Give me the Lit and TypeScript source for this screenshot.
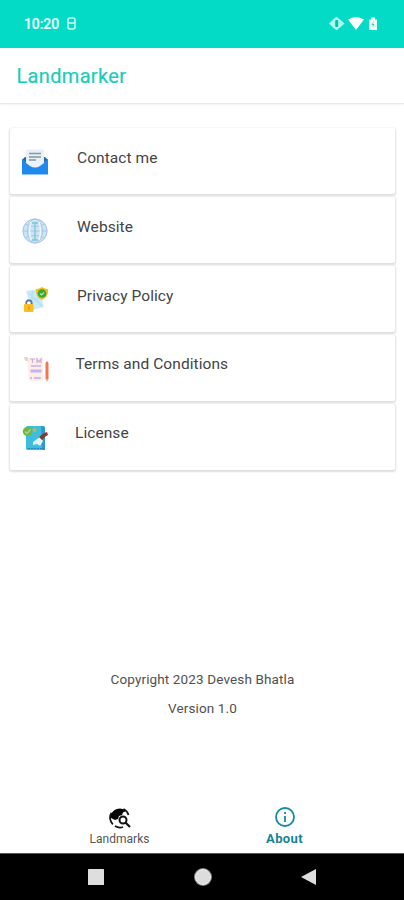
import { LitElement, html, css, svg } from "lit";
import { customElement } from "lit/decorators.js";

const icons = {
  mail: svg`<path d="M0 11 3 8h20l3 3v14H0z" fill="#1769c4"/><path d="M4 2q0-1.500 1.500-1.500h15Q22 .5 22 2v14H4z" fill="#e9f0f5"/><path d="M7 4.500h12M7 8h12M7 11h7" stroke="#8498a8" stroke-width="1.300"/><path d="M0 10 5 13.500l3 2.500q5 3.500 10 0l3-2.500 5-3.500v15.500H0z" fill="#2189ee"/><path d="M4 12h18v2l-4 3q-5 3-10 0l-4-3z" fill="#eaf3fa"/>`,
  globe: svg`<circle cx="13" cy="13" r="12.500" fill="#c9e6f3"/><g fill="none" stroke="#b3c2e6" stroke-width="1"><circle cx="13" cy="13" r="12"/><ellipse cx="13" cy="13" rx="7.500" ry="12"/><path d="M3 6q10 5 20 0M1 13h24M3 20q10-5 20 0"/></g><path d="M9 4q-3 9 0 18M17 4q3 9 0 18" fill="none" stroke="#e5f8fc" stroke-width="1.500"/><path d="M13 4v18M10 5h6M10 22h6" stroke="#7cc4da" stroke-width="1.300"/>`,
  privacy: svg`<path d="M4 4 17 2l5 18-12 3z" fill="#c9eafb"/><path d="m7 6 13 13M11 4l-3 17M5 13l14-2" stroke="#b5e0f8" stroke-width="1.500"/><path d="M20 0q3 2 6 2 1 8-6 11-7-3-6-11 3 0 6-2z" fill="#f0bf22"/><circle cx="20" cy="6.500" r="4.300" fill="#35a936"/><path d="m18 6.500 1.500 1.500L22 5.500" fill="none" stroke="#b9e6b4" stroke-width="1.200"/><path d="M4.200 18v-1.800a2.800 2.800 0 0 1 5.600 0V18" fill="none" stroke="#5b7487" stroke-width="1.600"/><rect x="2" y="17" width="9.500" height="8" rx="1" fill="#fbbd23"/><path d="M7 19.500v3" stroke="#c98a1a" stroke-width="1.200"/>`,
  terms: svg`<path d="M5 2h16v23H7z" fill="#fbeee9"/><path d="M2 1h4v4H3z" fill="#e3dac8"/><path d="M8 3h5M10.500 3v4M15 7V3l2 3 2-3v4" fill="none" stroke="#c9b0dd" stroke-width="1.200"/><path d="M9 10h10" stroke="#c0a6e0" stroke-width="1.300"/><path d="M8.500 15h11" stroke="#c8b3ea" stroke-width="3"/><path d="M8 22h2M12 22h7" stroke="#c4ace2" stroke-width="1.400"/><path d="M23.500 7 25 5l1.500 2v16h-3z" fill="#f0784b"/><path d="M23.500 23h3L25 26z" fill="#a6bdd2"/>`,
  license: svg`<rect x="4" y="1" width="18" height="24" rx="1.500" fill="#3fbddd"/><path d="M19 1h2q2 0 2 2v22h-3z" fill="#2a9bd0"/><path d="M6 23.500h16" stroke="#1b86bd" stroke-width="1.200" stroke-dasharray="2 1"/><circle cx="5.500" cy="6.500" r="4.700" fill="#70b846"/><path d="m3 6.500 2 2 3.500-4" fill="none" stroke="#b1d870" stroke-width="1.200"/><circle cx="12.500" cy="5" r="2" fill="#b8b65a"/><path d="m11 17 7-5 3 4-3 5-3-2-4 1z" fill="#e5f3f7"/><path d="m17 12 5-4 3 2-5 5z" fill="#773d37"/><path d="m22 8 3-1 1 3-2 1z" fill="#b52925"/>`,
};

const rows = [
  { icon: icons.mail, label: "Contact me", cls: "contact" },
  { icon: icons.globe, label: "Website", cls: "website" },
  { icon: icons.privacy, label: "Privacy Policy", cls: "privacy" },
  { icon: icons.terms, label: "Terms and Conditions", cls: "terms" },
  { icon: icons.license, label: "License", cls: "license" },
];

@customElement("app-root")
export class AppRoot extends LitElement {
  static styles = css`
    :host { display: flex; flex-direction: column; height: 900px; width: 404px; background: #fff; font-family: Roboto, sans-serif; color: #444; overflow: hidden; }
    * { box-sizing: border-box; }
    svg { display: block; flex: none; }
    .status { height: 47.500px; flex: none; background: #04dbc7; display: flex; align-items: center; padding: 0 25px 0 24px; color: #e6fffb; }
    .time { font-size: 14px; font-weight: 500; letter-spacing: -.1px; width: 43px; white-space: nowrap; -webkit-text-stroke: .2px #e6fffb; }
    .signals { margin-left: auto; }
    .title { height: 56px; flex: none; border-bottom: 1px solid #e8e8e8; box-shadow: 0 1px 2px #0000000d; padding: 2px 16.500px 0; display: flex; align-items: center; font-size: 20px; letter-spacing: .33px; color: #1cccb8; -webkit-text-stroke: .2px #1cccb8; }
    .list { padding: 24.500px 9.500px 0 10px; display: flex; flex-direction: column; gap: 3px; }
    .row { height: 66px; display: flex; align-items: center; padding: 2px 0 0 12px; border-radius: 2px; background: #fff; box-shadow: 0 1px 2px 1px #00000021; }
    .label { font-size: 15.500px; line-height: 20px; letter-spacing: .07px; margin: 0 0 8px 27px; white-space: nowrap; }
    .terms .label { margin-left: 25.500px; margin-bottom: 11px; }
    .license .label { margin-left: 25px; margin-bottom: 10px; }
    .credits { margin-top: auto; display: flex; flex-direction: column; gap: 9px; text-align: center; font-size: 13.500px; line-height: 20px; color: #505050; padding: 0 0 82px 1px; letter-spacing: .13px; }
    .tabs { height: 53px; flex: none; display: flex; padding: 0 37px; }
    .tab { width: 165px; display: flex; flex-direction: column; align-items: center; padding-top: 6px; font-size: 12px; letter-spacing: .05px; line-height: 16px; color: #555; gap: 2px; }
    .active { color: #168395; font-weight: 700; font-size: 13px; letter-spacing: .35px; gap: 3px; }
    .nav { height: 47px; flex: none; background: #000; border-top: 1px solid #555; display: flex; justify-content: space-between; align-items: center; padding: 0 87px 0 87px; }
  `;

  render() {
    return html`
      <header class="status">
        <span class="time">10:20</span>
        <svg width="9" height="13" viewBox="0 0 9 13" fill="none" stroke="#c9fff5" stroke-width="1.500"><path d="M1 6V3q0-2 2-2h3q2 0 2 2v3H1v4q0 2 2 2h3q2 0 2-2V6"/></svg>
        <svg class="signals" width="50" height="15" viewBox="0 0 50 15">
          <path d="m0 7.500 4-4 3.500-2.700L11 3.500l4.500 4-4.500 4-3.500 2.700L4 11.500z" fill="#a9fff0"/><rect x="6.200" y="4" width="3" height="7" rx="1" fill="#04bfae"/>
          <path d="M19 3.500q8-5 16 0L27 14z" fill="#fff"/><path d="M40 3.500h2V1.500h4v2h2V14h-8z" fill="#f0fffc"/><path d="m45 5-2.500 4H44l-1 3 2.500-4H44z" fill="#26cdbb"/>
        </svg>
      </header>
      <div class="title">Landmarker</div>
      <main class="list">
        ${rows.map(r => html`<div class="row ${r.cls}"><svg width="28" height="26" viewBox="0 0 28 26">${r.icon}</svg><span class="label">${r.label}</span></div>`)}
      </main>
      <div class="credits"><span>Copyright 2023 Devesh Bhatla</span><span>Version 1.0</span></div>
      <nav class="tabs">
        <div class="tab">
          <svg width="22" height="23" viewBox="0 0 22 23"><path d="M3.800 18.300A9.300 9.300 0 0 1 2.500 6.700M6 20a9 9 0 0 0 8 1M19.500 9a9.300 9.300 0 0 0-5-6" fill="none" stroke="#111" stroke-width="1.800"/><path d="M2 9Q4 2.500 11 2.500q4 0 6 2.500l-3 1.500-1 2.500-3 1-1 3-3 1-4-2z" fill="#000"/><circle cx="14" cy="14" r="3.500" fill="none" stroke="#111" stroke-width="2"/><path d="m16.500 16.500 4.500 4.500" stroke="#111" stroke-width="2.200"/></svg>
          <span>Landmarks</span>
        </div>
        <div class="tab active">
          <svg width="22" height="22" viewBox="0 0 22 22"><circle cx="11" cy="11" r="9" fill="none" stroke="#168ba0" stroke-width="1.800"/><path d="M11 10v6M11 6v2" stroke="#168ba0" stroke-width="1.800"/></svg>
          <span>About</span>
        </div>
      </nav>
      <footer class="nav">
        <svg width="18" height="18" viewBox="0 0 18 18"><rect x="1" y="1" width="16" height="16" rx=".5" fill="#dedede"/></svg>
        <svg width="20" height="20" viewBox="0 0 20 20"><circle cx="10" cy="10" r="9" fill="#888"/><circle cx="10" cy="10" r="7.500" fill="#ddd" stroke="#eee"/></svg>
        <svg width="17" height="18" viewBox="0 0 17 18"><path d="M1 9 16 1v16z" fill="#dedede"/></svg>
      </footer>
    `;
  }
}
